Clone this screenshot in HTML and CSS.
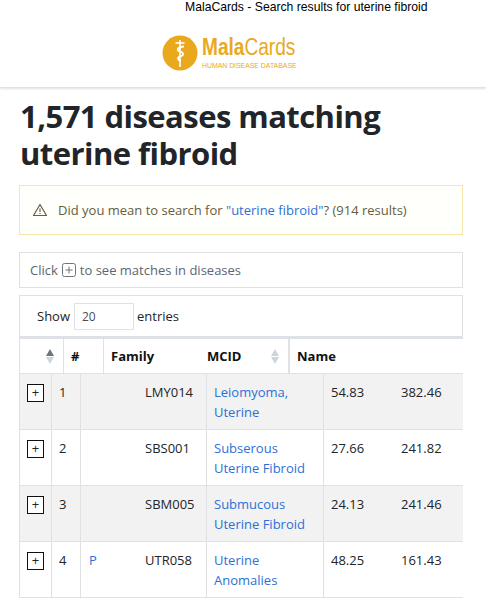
FILE: index.html
```html
<!DOCTYPE html>
<html lang="en">
<head>
    <meta charset="UTF-8">
    <meta name="viewport" content="width=device-width, initial-scale=1.0">
    <title>MalaCards - Search results for uterine fibroid</title>
    <link rel="stylesheet" href="styles.css">
</head>

<body>
    <div class="page_title">MalaCards - Search results for uterine fibroid</div>
    <header class="site_header">
        <div class="logo">
            <svg class="logo_mark" width="36" height="36" viewBox="0 0 36 36">
                <circle cx="18" cy="18" r="17.500" fill="#eaa91d"/>
                <path d="M18 5V32M13.500 8H22.500" stroke="#fff" stroke-width="1.600" fill="none"/>
                <path d="M22 11.500C15 12 14 15.500 18 16.500C22 17.500 22 20.500 18 21.500C15 22.500 15.500 25.500 19 26" stroke="#fff" stroke-width="1.800" fill="none"/>
            </svg>
            <div class="logo_text">
                <div class="logo_name"><b>Mala</b>Cards</div>
                <div class="logo_sub">HUMAN DISEASE DATABASE</div>
            </div>
        </div>
    </header>

    <main class="content">
        <h1 class="results_title">1,571 diseases matching uterine fibroid</h1>

        <div class="alert_box">
            <svg class="alert_icon" width="16" height="16" viewBox="0 0 16 16">
                <path d="M8 2.500L14.500 13.500H1.500Z" fill="none" stroke="#665c40" stroke-width="1.200" stroke-linejoin="round"/>
                <path d="M8 6.500V10M8 11V12" stroke="#665c40" stroke-width="1.200"/>
            </svg>
            <span>Did you mean to search for <a href="#">"uterine fibroid"</a>? (914 results)</span>
        </div>

        <div class="hint_box">
            Click
            <svg class="hint_icon" width="14" height="14" viewBox="0 0 14 14">
                <rect x="0.500" y="0.500" width="13" height="13" rx="2" fill="none" stroke="#6c757d"/>
                <path d="M7 3.500V10.500M3.500 7H10.500" stroke="#6c757d"/>
            </svg>
            <span>to see matches in diseases</span>
        </div>

        <div class="length_box">
            <span>Show</span>
            <input class="length_input" type="text" value="20">
            <span>entries</span>
        </div>

        <div class="table_wrap">
            <div class="table_head">
                <div class="head_cell head_sort">
                    <span class="sort_arrows"><i class="arrow_up dark"></i><i class="arrow_down"></i></span>
                </div>
                <div class="head_cell head_num">#</div>
                <div class="head_cell head_family">
                    <span class="family_label">Family</span>
                    <span class="mcid_label">MCID</span>
                    <span class="sort_arrows"><i class="arrow_up"></i><i class="arrow_down"></i></span>
                </div>
                <div class="head_cell head_name">Name</div>
            </div>

            <div class="table_row shaded">
                <div class="cell"><span class="plus_btn">+</span></div>
                <div class="cell">1</div>
                <div class="cell cell_family"><a href="#"></a><span>LMY014</span></div>
                <div class="cell"><a href="#">Leiomyoma, Uterine</a></div>
                <div class="cell cell_num">54.83</div>
                <div class="cell cell_num">382.46</div>
            </div>
            <div class="table_row">
                <div class="cell"><span class="plus_btn">+</span></div>
                <div class="cell">2</div>
                <div class="cell cell_family"><a href="#"></a><span>SBS001</span></div>
                <div class="cell"><a href="#">Subserous Uterine Fibroid</a></div>
                <div class="cell cell_num">27.66</div>
                <div class="cell cell_num">241.82</div>
            </div>
            <div class="table_row shaded">
                <div class="cell"><span class="plus_btn">+</span></div>
                <div class="cell">3</div>
                <div class="cell cell_family"><a href="#"></a><span>SBM005</span></div>
                <div class="cell"><a href="#">Submucous Uterine Fibroid</a></div>
                <div class="cell cell_num">24.13</div>
                <div class="cell cell_num">241.46</div>
            </div>
            <div class="table_row">
                <div class="cell"><span class="plus_btn">+</span></div>
                <div class="cell">4</div>
                <div class="cell cell_family"><a href="#">P</a><span>UTR058</span></div>
                <div class="cell"><a href="#">Uterine Anomalies</a></div>
                <div class="cell cell_num">48.25</div>
                <div class="cell cell_num">161.43</div>
            </div>
        </div>
    </main>
</body>
</html>
```

FILE: styles.css
```css
* {
    margin: 0;
    padding: 0;
    box-sizing: border-box;
}

html, body {
    height: 598px;
    overflow: hidden;
}

body {
    background: #fff;
    color: #212529;
    font-family: "Open Sans", "Noto Sans", sans-serif;
    font-size: 13px;
}

a {
    color: #2f6fd6;
    text-decoration: none;
}

.page_title {
    height: 15px;
    padding-left: 185px;
    font-family: "Liberation Sans", sans-serif;
    font-size: 12.200px;
    line-height: 15px;
    color: #000;
}

.site_header {
    height: 73px;
    padding: 20px 0 0 162px;
    border-bottom: 1px solid #dde4e4;
    box-shadow: 0 1px 2px #dde4e4;
}

.logo {
    display: flex;
    gap: 4px;
    color: #eaa91d;
    font-family: "Liberation Sans", sans-serif;
}

.logo_mark {
    flex: none;
}

.logo_text {
    padding-top: 2px;
    white-space: nowrap;
}

.logo_name {
    height: 24px;
    font-size: 23px;
    line-height: 21px;
    transform: scaleX(0.830);
    transform-origin: left;
}

.logo_sub {
    font-size: 8px;
    line-height: 9px;
    transform: scaleX(0.860);
    transform-origin: left;
}

.content {
    padding: 10px 23px 0 19px;
}

.results_title {
    padding-left: 1px;
    font-size: 31px;
    line-height: 37px;
    font-weight: 700;
    letter-spacing: -0.550px;
    margin-bottom: 13px;
}

.alert_box {
    height: 50px;
    display: flex;
    align-items: center;
    gap: 10px;
    padding-left: 12px;
    margin-bottom: 17px;
    background: #fffffb;
    border: 1px solid #f7e6ac;
    color: #665c40;
}

.alert_icon {
    flex: none;
}

.hint_box {
    height: 36px;
    display: flex;
    align-items: center;
    gap: 4px;
    padding-left: 10px;
    margin-bottom: 7px;
    border: 1px solid #dee2e6;
    color: #5c6670;
}

.hint_icon {
    flex: none;
}

.length_box {
    height: 42px;
    display: flex;
    align-items: center;
    gap: 3px;
    padding-left: 17px;
    border: 1px solid #dee2e6;
}

.length_input {
    width: 60px;
    height: 27px;
    margin-left: 1px;
    padding-left: 7px;
    border: 1px solid #dee2e6;
    font: inherit;
    font-size: 12px;
    color: #495057;
    outline: none;
}

.table_wrap {
    overflow: hidden;
    border-left: 1px solid #dee2e6;
}

.table_head {
    height: 37px;
    display: grid;
    grid-template-columns: 44px 40px 186px 1fr;
    border-top: 2px solid #dee2e6;
    border-bottom: 1px solid #dee2e6;
    font-weight: 700;
    color: #111;
}

.head_cell {
    display: flex;
    align-items: center;
    border-right: 1px solid #dee2e6;
    padding-left: 7px;
}

.head_sort {
    justify-content: flex-end;
    padding-right: 9px;
}

.head_family {
    padding-right: 9px;
    border-right-width: 2px;
}

.family_label {
    width: 96px;
}

.mcid_label {
    flex: 1;
}

.head_name {
    border-right: none;
}

.sort_arrows {
    display: flex;
    flex-direction: column;
    gap: 1px;
}

.arrow_up,
.arrow_down {
    width: 0;
    height: 0;
    border-left: 4.500px solid transparent;
    border-right: 4.500px solid transparent;
}

.arrow_up {
    border-bottom: 7px solid #ced4da;
}

.arrow_up.dark {
    border-bottom-color: #6c757d;
}

.arrow_down {
    border-top: 7px solid #ced4da;
}

.table_row {
    height: 56px;
    display: grid;
    grid-template-columns: 32px 29px 126px 117px 70px 80px;
    width: 480px;
    border-bottom: 1px solid #dee2e6;
}

.shaded {
    background: #f2f2f2;
}

.cell {
    padding: 8px 7px 0;
    line-height: 20px;
    border-right: 1px solid #dee2e6;
}

.cell_family {
    display: grid;
    grid-template-columns: 56px 1fr;
    padding-left: 8px;
}

.cell_num {
    border-right: none;
}

.plus_btn {
    display: block;
    width: 17px;
    height: 18px;
    margin-top: 2px;
    border: 1px solid #111;
    text-align: center;
    line-height: 15px;
    font-size: 13px;
    background: #fff;
}
```
